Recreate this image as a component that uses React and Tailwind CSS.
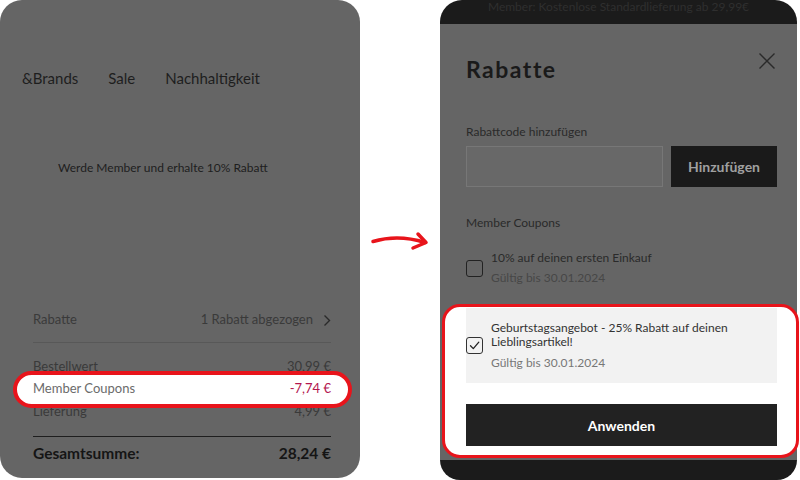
import React from "react";

function Checkbox({ checked }) {
  return (
    <div className={`w-[17px] h-[17px] shrink-0 rounded-[3px] border-[1.5px] flex items-center justify-center ${checked ? "border-[#333]" : "border-[#222]"}`}>
      {checked && (
        <svg width="13" height="13" viewBox="0 0 13 13" fill="none">
          <path d="M2.5 6.8 L5.3 9.6 L10.8 3.2" stroke="#222" strokeWidth="1.3" strokeLinecap="round" strokeLinejoin="round" />
        </svg>
      )}
    </div>
  );
}

export default function App() {
  const font = { fontFamily: "Lato, 'Noto Sans', sans-serif" };
  return (
    <div className="w-[800px] h-[480px] bg-white flex overflow-hidden" style={font}>
      {/* Left panel */}
      <div className="w-[360px] h-[478px] shrink-0 bg-[#656565] rounded-[22px] flex flex-col">
        <div className="mt-[68px] ml-[22px] flex gap-[30px] text-[15px] leading-[20px] text-[#1e1e1e]">
          <span>&amp;Brands</span>
          <span>Sale</span>
          <span>Nachhaltigkeit</span>
        </div>
        <div className="mt-[72px] ml-[58px] text-[12px] leading-[16px] text-[#1e1e1e]">
          Werde Member und erhalte 10% Rabatt
        </div>
        <div className="mt-[134px] ml-[33px] mr-[29px] flex flex-col">
          <div className="flex justify-between items-center h-[20px] text-[13px] text-[#3a3a3a]">
            <span>Rabatte</span>
            <span className="flex items-center gap-[10px]">
              1 Rabatt abgezogen
              <svg width="8" height="13" viewBox="0 0 8 13" fill="none">
                <path d="M1.5 1.5 L6.5 6.5 L1.5 11.5" stroke="#2a2a2a" strokeWidth="1.4" />
              </svg>
            </span>
          </div>
          <div className="mt-[12px] h-[1px] bg-[#585858]" />
          <div className="mt-[14px] flex justify-between items-center h-[20px] text-[13px] text-[#3a3a3a]">
            <span>Bestellwert</span>
            <span>30,99 €</span>
          </div>
          <div className="relative mt-[2px] h-[20px]">
            <div className="absolute z-10 -left-[20px] -right-[21px] -top-[8px] -bottom-[9px] bg-white border-[4px] border-[#e8141b] rounded-full" />
            <div className="relative z-20 flex justify-between items-center h-[20px] text-[13px]">
              <span className="text-[#6b6b6b]">Member Coupons</span>
              <span className="text-[#b3164f]">-7,74 €</span>
            </div>
          </div>
          <div className="mt-[3px] flex justify-between items-center h-[20px] text-[13px] text-[#3a3a3a]">
            <span>Lieferung</span>
            <span>4,99 €</span>
          </div>
          <div className="mt-[14px] h-[1px] bg-[#1e1e1e]" />
          <div className="mt-[7px] flex justify-between items-center h-[20px] text-[15.5px] font-bold text-[#151515]">
            <span>Gesamtsumme:</span>
            <span>28,24 €</span>
          </div>
        </div>
      </div>

      {/* Arrow */}
      <div className="w-[80px] shrink-0 flex items-center justify-center">
        <svg width="60" height="25" viewBox="0 0 60 25" fill="none" className="mt-[3px]">
          <path d="M3 12.5 Q 28 5 55 13.5" stroke="#e8141b" strokeWidth="3.5" strokeLinecap="round" fill="none" />
          <path d="M48 5 L56 13.5 L43 19" stroke="#e8141b" strokeWidth="3.5" strokeLinecap="round" strokeLinejoin="round" fill="none" />
        </svg>
      </div>

      {/* Right panel */}
      <div className="w-[357px] shrink-0 h-[480px] flex flex-col">
        <div className="h-[24px] bg-[#1b1b1b] rounded-t-[22px] flex justify-center overflow-hidden">
          <span className="text-[12px] leading-[13px] text-[#2f2f2f]">Member: Kostenlose Standardlieferung ab 29,99€</span>
        </div>
        <div className="bg-[#656565] flex-1 pl-[26px] pr-[20px] flex flex-col">
          <div className="mt-[31px] flex justify-between items-start">
            <span className="text-[23px] leading-[28px] font-bold tracking-[1.5px] text-[#1a1a1a]">Rabatte</span>
            <svg width="18" height="18" viewBox="0 0 18 18" fill="none" className="-mt-[3px] mr-[1px]">
              <path d="M1.5 1.5 L16.5 16.5 M16.5 1.5 L1.5 16.5" stroke="#2a2a2a" strokeWidth="1.4" />
            </svg>
          </div>
          <div className="mt-[41px] text-[12px] leading-[16px] text-[#2a2a2a]">Rabattcode hinzufügen</div>
          <div className="mt-[6px] flex gap-[8px] h-[41px]">
            <div className="w-[197px] h-full border border-[#777] bg-[#686868]" />
            <div className="flex-1 h-full bg-[#1a1a1a] flex items-center justify-center text-[14px] font-bold text-[#a0a0a0]">
              Hinzufügen
            </div>
          </div>
          <div className="mt-[28px] text-[12px] leading-[16px] text-[#2a2a2a]">Member Coupons</div>
          <div className="mt-[19px] flex items-center gap-[8px]">
            <Checkbox checked={false} />
            <div className="flex flex-col gap-[4px]">
              <span className="text-[12px] leading-[16px] text-[#2a2a2a]">10% auf deinen ersten Einkauf</span>
              <span className="text-[12px] leading-[16px] text-[#474747]">Gültig bis 30.01.2024</span>
            </div>
          </div>
          <div className="mt-[18px] -ml-[24px] -mr-[22px] bg-white border-[3px] border-[#e8141b] rounded-[18px] pl-[21px] pr-[19px] pt-[1px] pb-[9px] flex flex-col">
            <div className="h-[75px] bg-[#f2f2f2] flex items-center gap-[8px]">
              <Checkbox checked={true} />
              <div className="flex flex-col">
                <span className="text-[12px] leading-[14px] text-[#333]">Geburtstagsangebot - 25% Rabatt auf deinen</span>
                <span className="text-[12px] leading-[14px] text-[#333]">Lieblingsartikel!</span>
                <span className="mt-[7px] text-[12px] leading-[14px] text-[#777]">Gültig bis 30.01.2024</span>
              </div>
            </div>
            <div className="mt-[21px] h-[42px] bg-[#222] flex items-center justify-center text-[14px] font-bold text-white">
              Anwenden
            </div>
          </div>
          <div className="flex-1" />
        </div>
        <div className="h-[20px] bg-[#1b1b1b] rounded-b-[22px]" />
      </div>
    </div>
  );
}
